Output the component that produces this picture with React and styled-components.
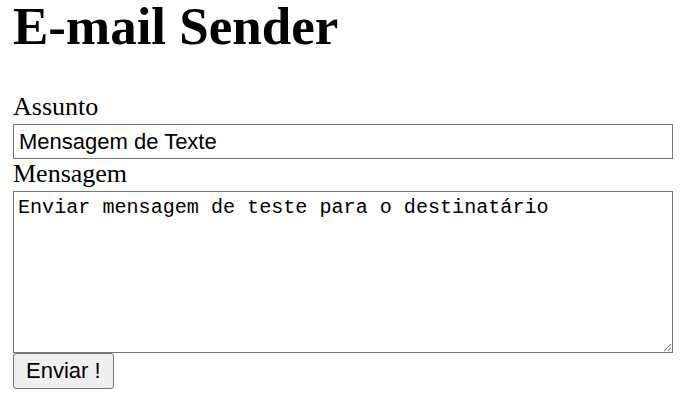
import React from "react";
import styled, { createGlobalStyle } from "styled-components";

const GlobalStyle = createGlobalStyle`
  html, body {
    margin: 0;
    padding: 0;
    background: #ffffff;
  }
  body {
    font-family: "Liberation Serif", "Times New Roman", serif;
    color: #000000;
  }
  * {
    box-sizing: border-box;
  }
`;

const Page = styled.main`
  padding: 0 13px;
`;

const Title = styled.h1`
  margin: 0 0 40px;
  padding-top: 0;
  font-family: "Liberation Serif", "Times New Roman", serif;
  font-size: 53px;
  line-height: 52px;
  font-weight: 700;
`;

const Form = styled.form`
  display: flex;
  flex-direction: column;
  align-items: stretch;
`;

const Label = styled.label`
  display: block;
  font-family: "Liberation Serif", "Times New Roman", serif;
  font-size: 26px;
  line-height: 30px;
  margin-bottom: 2px;
`;

const TextInput = styled.input`
  width: 100%;
  height: 35px;
  margin: 0;
  padding: 0 5px;
  border: 1px solid #767676;
  border-radius: 0;
  background: #ffffff;
  font-family: "Liberation Sans", Arial, sans-serif;
  font-size: 22px;
  color: #000000;
  outline: none;
`;

const TextArea = styled.textarea`
  display: block;
  width: 100%;
  height: 162px;
  margin: 0;
  padding: 4px 4px;
  border: 1px solid #767676;
  border-radius: 0;
  background: #ffffff;
  font-family: "Liberation Mono", "Courier New", monospace;
  font-size: 20.1px;
  color: #000000;
  outline: none;
`;

const SubmitButton = styled.button`
  align-self: flex-start;
  height: 36px;
  margin: 0;
  padding: 0 12px;
  border: 1px solid #767676;
  border-radius: 3px;
  background: #efefef;
  font-family: "Liberation Sans", Arial, sans-serif;
  font-size: 22px;
  color: #000000;
  cursor: pointer;
`;

export default function App() {
  return (
    <>
      <GlobalStyle />
      <Page>
        <Title>E-mail Sender</Title>
        <Form onSubmit={(e) => e.preventDefault()}>
          <Label htmlFor="assunto">Assunto</Label>
          <TextInput id="assunto" type="text" defaultValue="Mensagem de Texte" />
          <Label htmlFor="mensagem">Mensagem</Label>
          <TextArea
            id="mensagem"
            defaultValue="Enviar mensagem de teste para o destinatário"
          />
          <SubmitButton type="submit">Enviar !</SubmitButton>
        </Form>
      </Page>
    </>
  );
}
